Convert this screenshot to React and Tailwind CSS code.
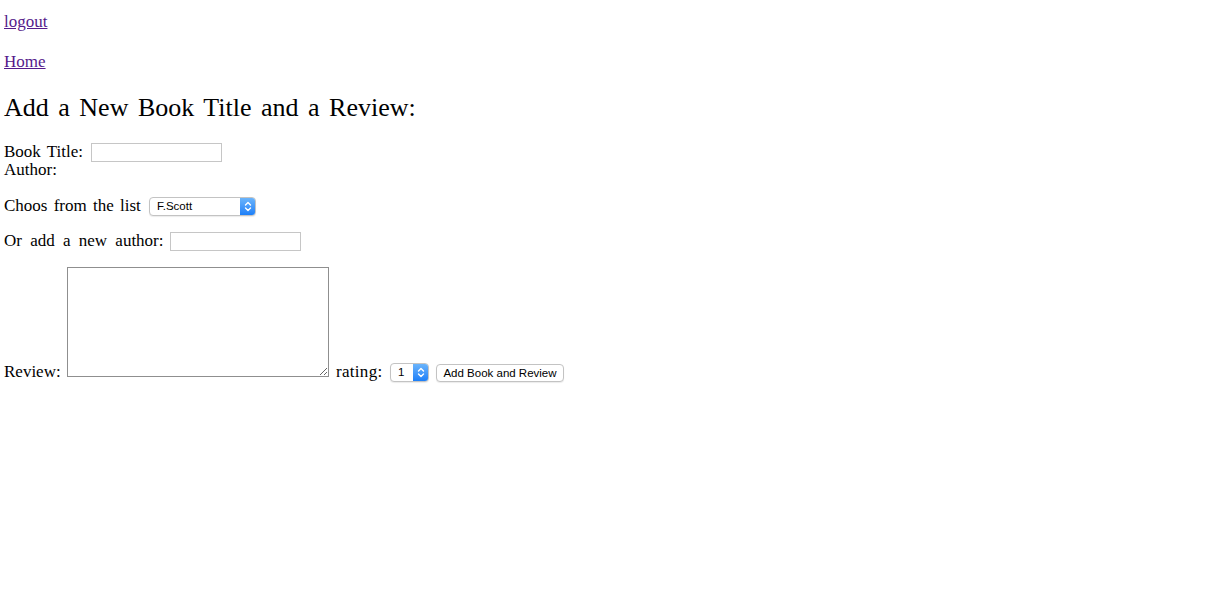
import React from 'react'

const Chevrons = () => (
  <svg width="8" height="11" viewBox="0 0 8 11" fill="none" stroke="white" strokeWidth="1.4" strokeLinecap="round" strokeLinejoin="round">
    <path d="M1.5 4 L4 1.5 L6.5 4" />
    <path d="M1.5 7 L4 9.5 L6.5 7" />
  </svg>
)

// mac-style popup select
const FakeSelect = ({ value, className }) => (
  <div className={`flex h-[19px] rounded-[4px] border border-[#c3c3c3] bg-white shadow-[0_1px_1px_rgba(0,0,0,0.08)] overflow-hidden font-['Liberation_Sans',sans-serif] text-[11.5px] text-black ${className}`}>
    <span className="flex-1 pl-[7px] leading-[17px]">{value}</span>
    <span className="w-[15px] flex items-center justify-center bg-gradient-to-b from-[#6ab4fb] to-[#1b7ff8]">
      <Chevrons />
    </span>
  </div>
)

const App = () => {
  return (
    <div className="min-h-screen bg-white px-[4px] pt-[12px] font-['Liberation_Serif',serif] text-[17px] text-black">
      <a href="#" className="block w-fit h-[20px] leading-[20px] underline text-[#551a8b]">logout</a>
      <a href="#" className="block w-fit mt-[20px] h-[20px] leading-[20px] underline text-[#551a8b]">Home</a>

      <h2 className="mt-[21px] h-[30px] leading-[30px] text-[26px] font-normal [word-spacing:3px]">
        Add a New Book Title and a Review:
      </h2>

      <form className="[word-spacing:2px]">
        {/* Book title */}
        <div className="mt-[16px] flex items-start h-[18px]">
          <span className="w-[87px] pt-[3px] leading-[20px]">Book Title:</span>
          <input type="text" className="mt-[4px] w-[131px] h-[19px] border border-[#c6c6c6] bg-white outline-none" />
        </div>
        <div className="h-[20px] pt-[3px] leading-[20px]">Author:</div>

        {/* Author from list */}
        <div className="mt-[15px] flex items-start h-[24px]">
          <span className="w-[145px] pt-[4px] leading-[20px]">Choos from the list</span>
          <FakeSelect value="F.Scott" className="mt-[5px] w-[107px]" />
        </div>

        {/* New author */}
        <div className="mt-[12px] flex items-start h-[23px]">
          <span className="w-[166px] pt-[3px] leading-[20px] [word-spacing:4px]">Or add a new author:</span>
          <input type="text" className="mt-[4px] w-[131px] h-[19px] border border-[#c6c6c6] bg-white outline-none" />
        </div>

        {/* Review + rating */}
        <div className="mt-[16px] flex items-end">
          <span className="w-[63px] mb-[-2px] leading-[20px]">Review:</span>
          <textarea className="mb-[3px] w-[262px] h-[110px] border border-[#8f8f8f] bg-white outline-none resize" />
          <span className="ml-[7px] w-[54px] mb-[-2px] leading-[20px] [word-spacing:0px] tracking-[0.3px]">rating:</span>
          <FakeSelect value="1" className="mb-[-2px] w-[39px]" />
          <button type="button" className="ml-[7px] mb-[-2px] w-[128px] h-[18px] rounded-[4px] border border-[#c3c3c3] bg-white shadow-[0_1px_1px_rgba(0,0,0,0.08)] font-['Liberation_Sans',sans-serif] text-[11.5px] leading-[16px] [word-spacing:0px] text-black">
            Add Book and Review
          </button>
        </div>
      </form>
    </div>
  )
}

export default App
